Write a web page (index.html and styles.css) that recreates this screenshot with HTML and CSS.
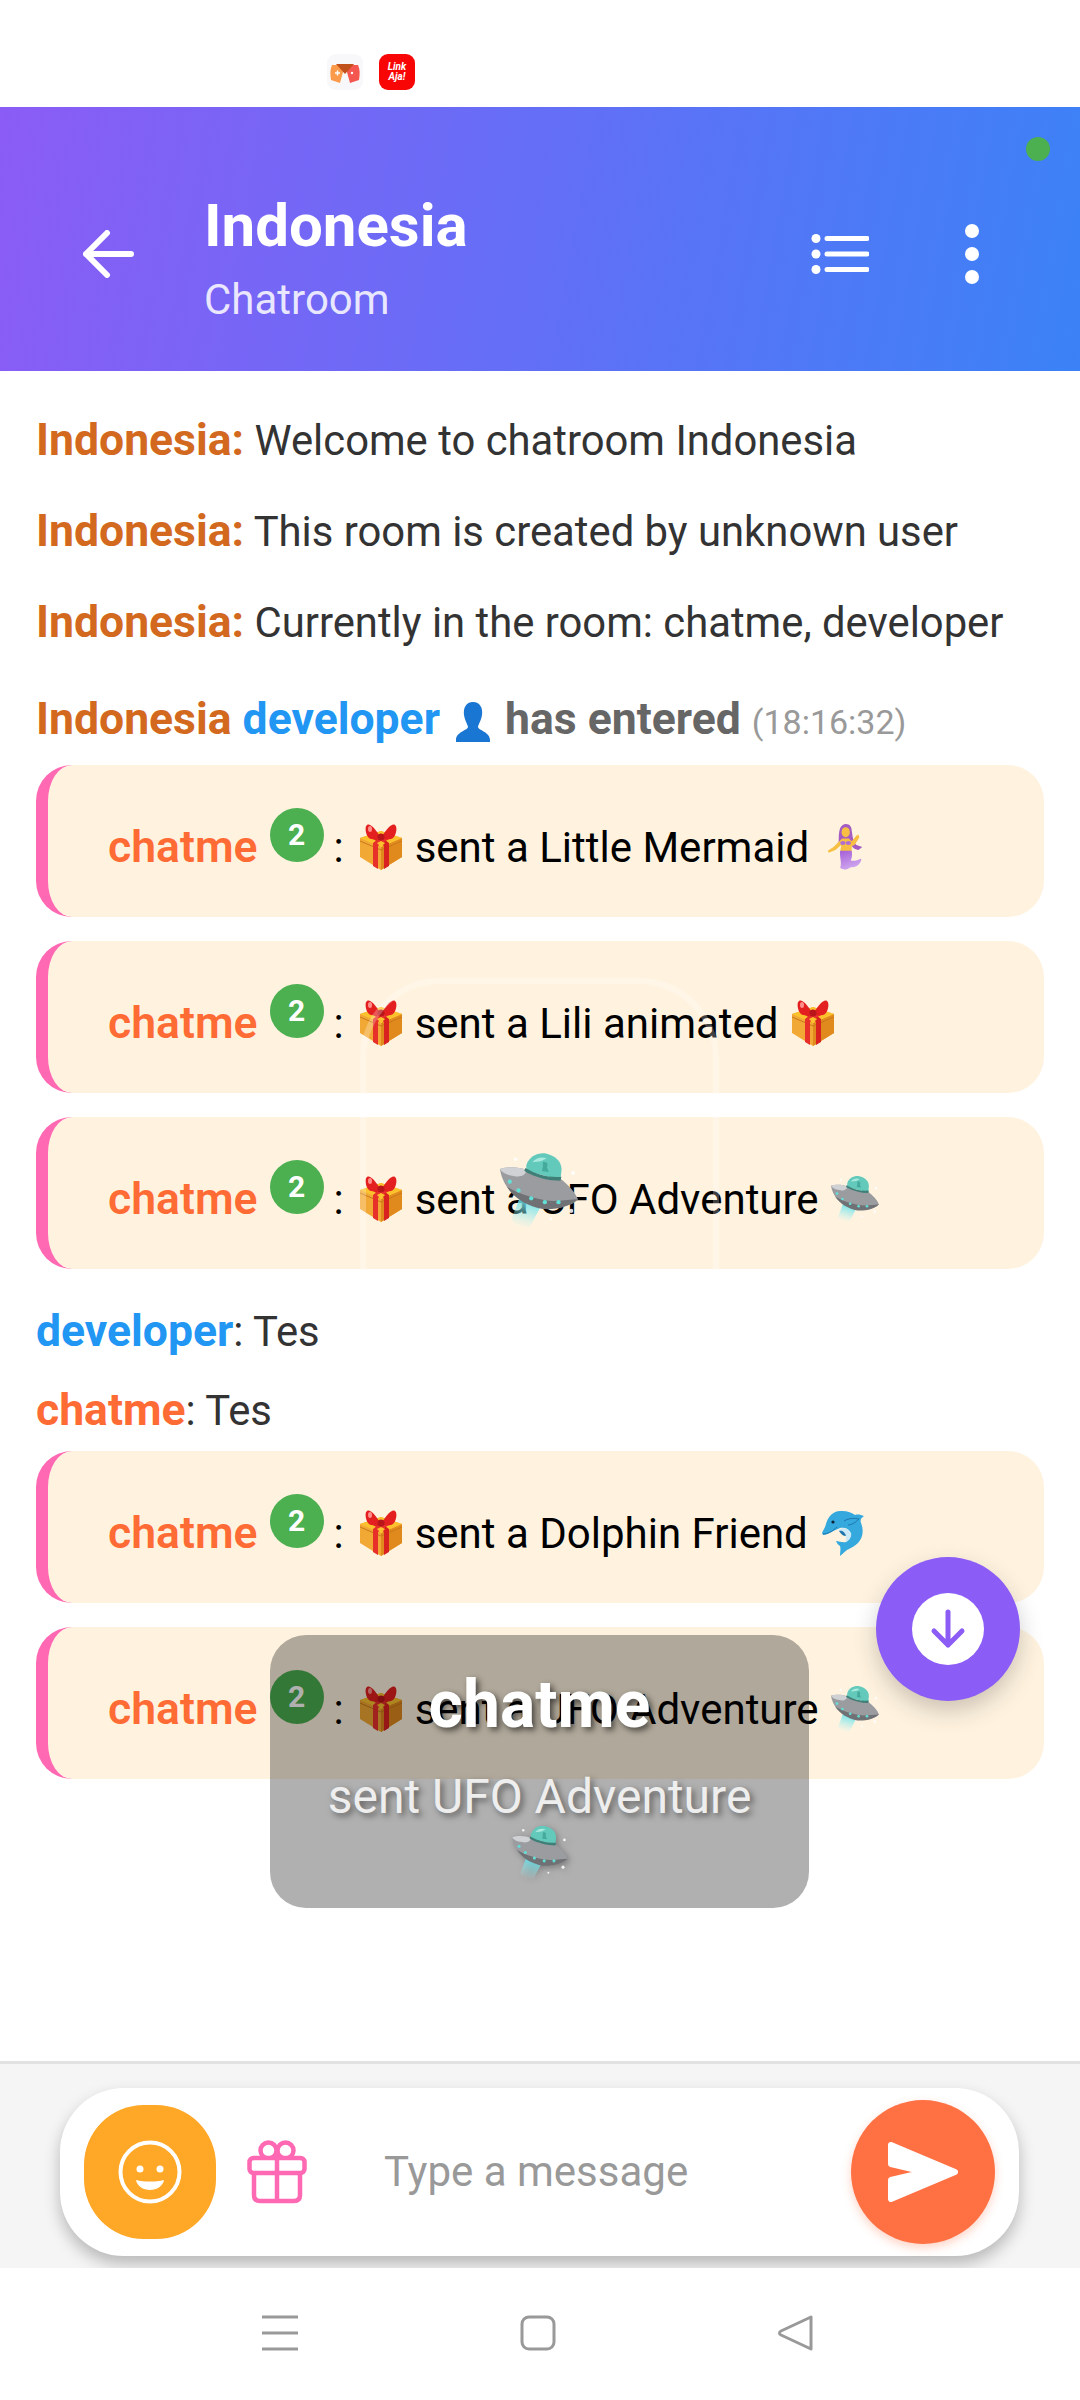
FILE: index.html
```html
<!DOCTYPE html>
<html lang="en">
<head>
<meta charset="utf-8">
<title>Indonesia Chatroom</title>
<link rel="stylesheet" href="styles.css">
</head>
<body>
<svg class="defs" width="0" height="0" aria-hidden="true">
  <defs>
    <linearGradient id="beam" x1="0.6" y1="0" x2="0.3" y2="1">
      <stop offset="0" stop-color="#5fdfe8"/>
      <stop offset="1" stop-color="#a8f0f2" stop-opacity="0"/>
    </linearGradient>
    <linearGradient id="tail" x1="0" y1="0" x2="0.4" y2="1">
      <stop offset="0" stop-color="#a45fd6"/>
      <stop offset="1" stop-color="#cfa6f0"/>
    </linearGradient>
    <symbol id="gift" viewBox="0 0 44 46">
      <path d="M1 14 22 7 43 14V33L22 46 1 33Z" fill="#f2a835"/>
      <path d="M22 23 43 14V33L22 46Z" fill="#e08a1e"/>
      <path d="M1 14 22 7 43 14 22 23Z" fill="#fcc22e"/>
      <path d="M1 17 22 26 43 17" fill="none" stroke="#c97a18" stroke-width="1"/>
      <path d="M8 11 16 8 30 19V42L25 45V22Z" fill="#d9221f"/>
      <path d="M36 11 28 8 14 19V42L19 45V22Z" fill="#e8302a"/>
      <path d="M18 19 22 17 26 19 22 23Z" fill="#fcc22e"/>
      <path d="M22 14C16 4 11-1 8 1 5 3 7 14 12 15 16 16 20 15 22 14Z" fill="#e3201f"/>
      <path d="M22 14C28 4 33-1 36 1 39 3 37 14 32 15 28 16 24 15 22 14Z" fill="#e3201f"/>
      <circle cx="22" cy="13" r="3.5" fill="#b8161a"/>
      <ellipse cx="11" cy="5" rx="2" ry="3" fill="#ff8f8a"/>
    </symbol>
    <symbol id="ufo" viewBox="0 0 80 76">
      <path d="M20 46 12 67C13 73 24 78 31 75L43 52Z" fill="url(#beam)"/>
      <path d="M27 12C30 3 38-1 47 0 57 2 64 9 63 18L62 27 27 18Z" fill="#62c9bb"/>
      <path d="M33 9C37 4 43 3 48 5L42 8Z" fill="#a9e9de"/>
      <path d="M44 9C48 8 50 11 48 14L50 19 43 18 44 14Z" fill="#45a99b"/>
      <path d="M0 16C8 13 20 14 27 17 38 23 50 26 62 26 70 32 77 40 80 47 75 52 68 55 58 56 44 58 24 50 10 38 5 32 1 24 0 16Z" fill="#9b9ca0"/>
      <path d="M0 16C8 13 20 14 27 17 27 22 21 25 14 23 7 22 2 20 0 16Z" fill="#d0d1d4"/>
      <path d="M7 34C14 46 30 55 44 57 58 58 72 54 80 47 72 47 58 50 46 48 30 45 16 40 7 34Z" fill="#6f7175"/>
      <path d="M26 15C38 22 50 25 63 24L62 28C50 28 37 25 25 18Z" fill="#3f7f78"/>
      <g fill="#63e0d6">
        <circle cx="10" cy="29" r="2.200"/><circle cx="19" cy="38" r="2.200"/><circle cx="32" cy="46" r="2.200"/><circle cx="46" cy="50" r="2.200"/><circle cx="60" cy="50" r="2.200"/>
      </g>
      <g fill="#fff" opacity=".85">
        <circle cx="16" cy="6" r="1.800"/><circle cx="75" cy="20" r="2"/><circle cx="73" cy="59" r="2.200"/><circle cx="52" cy="67" r="1.400"/>
      </g>
    </symbol>
    <symbol id="mermaid" viewBox="0 0 36 48">
      <path d="M12 8C13 2 16 0 19 0 23 0 25 3 25 7 26 12 26 18 30 22L36 24 32 27C27 27 24 23 22 16H15C14 19 13 21 11 21 12 16 11 12 12 8Z" fill="#a45cc2"/>
      <ellipse cx="18.700" cy="8.500" rx="4.300" ry="5.200" fill="#f7c043"/>
      <path d="M15 15H22L25 18 30 12 32 11 33 14 28 22 25 23 25 29H13L14 22 8 27 1 30 0 28 6 24 12 18Z" fill="#f7c043"/>
      <ellipse cx="15.800" cy="19.800" rx="2.800" ry="2" fill="#b06fd0"/><ellipse cx="21.500" cy="19.800" rx="2.800" ry="2" fill="#b06fd0"/>
      <path d="M13 28H25C26 33 25 36 24 38 27 39 31 38 35 36 35 41 30 46 24 45 20 48 16 48 13 46 15 40 12 34 13 28Z" fill="url(#tail)"/>
    </symbol>
    <symbol id="dolphin" viewBox="0 0 44 46">
      <path d="M0 23C1 20 3 18 4 14 6 6 12 0 20 1 26 1 30 3 33 5 36 4 39 5 42 6 39 8 38 10 39 13 42 20 41 28 36 33 33 36 29 38 27 39 24 40 22 43 18 46 18 42 19 39 18 36 16 35 15 33 14 31 17 31 21 33 24 32 28 30 29 27 28 22 26 18 22 17 18 18 12 20 6 25 1 25Z" fill="#35a9dd"/>
      <path d="M16 20C21 17 27 18 29 23 30 27 27 31 23 32 26 27 22 22 16 20Z" fill="#cbe9f6"/>
      <path d="M17 21C20 20 23 22 24 26 21 26 19 24 17 21Z" fill="#1d76ab"/>
      <path d="M1 24C6 24 11 21 15 17" fill="none" stroke="#1d76ab" stroke-width="1"/>
      <path d="M22 11C27 8 33 8 37 9 34 12 30 15 26 15" fill="none" stroke="#1d76ab" stroke-width="1"/>
      <circle cx="11" cy="12" r="1.600" fill="#123"/>
    </symbol>
  </defs>
</svg>

<div class="screen">
  <div class="status">
    <div class="app-icon app-game">
      <svg viewBox="0 0 36 36" width="36" height="36">
        <path d="M5 11H18L13 29 4 26C3 20 3 15 5 11Z" fill="#fb9a4a"/>
        <path d="M31 11H18L23 29 32 26C33 20 33 15 31 11Z" fill="#f4574f"/>
        <path d="M9 10H27L18 20Z" fill="#c1521c"/>
        <path d="M8 19h5M10.500 16.500v5" stroke="#fff" stroke-width="1.500"/>
        <circle cx="25" cy="19" r="1.200" fill="#fff"/>
      </svg>
    </div>
    <div class="app-icon app-link"><span class="app-link-text">Link<br>Aja!</span></div>
  </div>

  <header class="topbar">
    <span class="online-dot"></span>
    <svg class="back" viewBox="0 0 51 48" width="51" height="48">
      <path d="M24 3 3 24 24 45M3 24H48" fill="none" stroke="#fff" stroke-width="6" stroke-linecap="round" stroke-linejoin="round"/>
    </svg>
    <div class="room">
      <div class="room-name">Indonesia</div>
      <div class="room-sub">Chatroom</div>
    </div>
    <svg class="list-icon" viewBox="0 0 58 40" width="58" height="40">
      <g fill="#fff"><circle cx="5" cy="4.500" r="4.500"/><circle cx="5" cy="20" r="4.500"/><circle cx="5" cy="35.500" r="4.500"/></g>
      <path d="M16 4.500H56M16 20H56M16 35.500H56" stroke="#fff" stroke-width="5" stroke-linecap="round"/>
    </svg>
    <svg class="kebab" viewBox="0 0 14 60" width="14" height="60">
      <g fill="#fff"><circle cx="7" cy="7" r="7"/><circle cx="7" cy="30" r="7"/><circle cx="7" cy="53" r="7"/></g>
    </svg>
  </header>

  <main class="chat">
    <div class="sys"><b class="room-tag">Indonesia:</b> Welcome to chatroom Indonesia</div>
    <div class="sys"><b class="room-tag">Indonesia:</b> This room is created by unknown user</div>
    <div class="sys"><b class="room-tag">Indonesia:</b> Currently in the room: chatme, developer</div>
    <div class="enter">
      <b class="room-tag">Indonesia</b> <b class="dev">developer</b>
      <svg class="person" viewBox="0 0 34 40" width="34" height="40"><path d="M17 0C24 0 27 6 26 13 25 19 22 23 22 25 22 28 34 30 34 38V40H0V38C0 30 12 28 12 25 12 23 9 19 8 13 7 6 10 0 17 0Z" fill="#1976d2"/></svg>
      <b class="entered">has entered</b> <span class="time">(18:16:32)</span>
    </div>

    <div class="gift-card">
      <span class="sender">chatme</span><span class="level">2</span><span class="colon">:</span>
      <svg class="emo"><use href="#gift"/></svg><span class="gift-text">sent a Little Mermaid</span>
      <svg class="emo emo-mermaid"><use href="#mermaid"/></svg>
    </div>
    <div class="gift-card">
      <span class="sender">chatme</span><span class="level">2</span><span class="colon">:</span>
      <svg class="emo"><use href="#gift"/></svg><span class="gift-text">sent a Lili animated</span>
      <svg class="emo"><use href="#gift"/></svg>
    </div>
    <div class="gift-card">
      <span class="sender">chatme</span><span class="level">2</span><span class="colon">:</span>
      <svg class="emo"><use href="#gift"/></svg><span class="gift-text">sent a UFO Adventure</span>
      <svg class="emo emo-ufo"><use href="#ufo"/></svg>
    </div>

    <div class="line line-dev"><b class="dev">developer</b>: Tes</div>
    <div class="line line-me"><b class="me">chatme</b>: Tes</div>

    <div class="gift-card">
      <span class="sender">chatme</span><span class="level">2</span><span class="colon">:</span>
      <svg class="emo"><use href="#gift"/></svg><span class="gift-text">sent a Dolphin Friend</span>
      <svg class="emo emo-dolphin"><use href="#dolphin"/></svg>
    </div>
    <div class="gift-card">
      <span class="sender">chatme</span><span class="level">2</span><span class="colon">:</span>
      <svg class="emo"><use href="#gift"/></svg><span class="gift-text">sent a UFO Adventure</span>
      <svg class="emo emo-ufo"><use href="#ufo"/></svg>
    </div>
  </main>

  <footer class="composer">
    <div class="pill">
      <div class="emoji-btn">
        <svg viewBox="0 0 66 66" width="66" height="66">
          <circle cx="33" cy="33" r="29.500" fill="none" stroke="#fff" stroke-width="4"/>
          <circle cx="23" cy="30" r="3.500" fill="#fff"/><circle cx="43" cy="30" r="3.500" fill="#fff"/>
          <path d="M19 41C28 43 38 43 47 41 46 47 40 51 33 51 26 51 20 47 19 41Z" fill="#fff"/>
        </svg>
      </div>
      <svg class="gift-btn" viewBox="0 0 60 64" width="60" height="64">
        <g fill="none" stroke="#ff69b4" stroke-width="4.500" stroke-linejoin="round">
          <circle cx="21.500" cy="10.500" r="8"/>
          <circle cx="38.500" cy="10.500" r="8"/>
          <rect x="2.500" y="18" width="55" height="15" rx="4" fill="#fff"/>
          <path d="M7 33V55C7 59 9 61 13 61H47C51 61 53 59 53 55V33M30 18V61"/>
        </g>
      </svg>
      <span class="placeholder">Type a message</span>
      <div class="send-btn">
        <svg viewBox="0 0 72 62" width="72" height="62">
          <path d="M4 4 68 31 4 58V39L38 31 4 23Z" fill="#fff" stroke="#fff" stroke-width="6" stroke-linejoin="round"/>
        </svg>
      </div>
    </div>
  </footer>

  <nav class="sysnav">
    <svg viewBox="0 0 36 36" width="36" height="36"><path d="M0 2H36M0 18H36M0 34H36" stroke="#999" stroke-width="3"/></svg>
    <svg viewBox="0 0 36 36" width="36" height="36"><rect x="2" y="2" width="32" height="32" rx="7" fill="none" stroke="#999" stroke-width="3"/></svg>
    <svg viewBox="0 0 36 36" width="36" height="36"><path d="M33 2V34L3 20C1 19 1 17 3 16Z" fill="none" stroke="#999" stroke-width="3" stroke-linejoin="round"/></svg>
  </nav>

  <div class="ghost"></div>
  <svg class="ufo-float"><use href="#ufo"/></svg>

  <div class="toast">
    <div class="toast-name">chatme</div>
    <div class="toast-text">sent UFO Adventure</div>
    <svg class="toast-ufo"><use href="#ufo"/></svg>
  </div>

  <div class="fab">
    <div class="fab-inner">
      <svg viewBox="0 0 36 40" width="36" height="40"><path d="M18 3V36M4 22 18 36 32 22" fill="none" stroke="#8b5cf6" stroke-width="5" stroke-linecap="round" stroke-linejoin="round"/></svg>
    </div>
  </div>
</div>
</body>
</html>
```
FILE: styles.css
```css
* { box-sizing: border-box; }
html, body { margin: 0; padding: 0; }
body { font-family: Roboto, "Noto Sans", sans-serif; background: #fff; }
.defs { position: absolute; }

.screen {
  position: relative;
  width: 1080px;
  height: 2400px;
  overflow: hidden;
  display: flex;
  flex-direction: column;
  background: #fff;
}

.status {
  height: 107px;
  flex: none;
  display: flex;
  gap: 16px;
  padding: 54px 0 0 327px;
}
.app-icon { width: 36px; height: 36px; border-radius: 9px; }
.app-game { background: #f8f8fa; }
.app-link {
  background: #f80606;
  color: #fff;
  display: flex;
  align-items: center;
  justify-content: center;
}
.app-link-text {
  font-size: 10px;
  line-height: 10px;
  font-weight: 700;
  font-style: italic;
  text-align: center;
}

.topbar {
  position: relative;
  height: 264px;
  flex: none;
  display: flex;
  align-items: center;
  padding: 30px 0 0 83px;
  background: linear-gradient(100deg, #8b5cf6 0%, #3b82f6 100%);
  color: #fff;
}
.online-dot {
  position: absolute;
  top: 30px;
  left: 1026px;
  width: 24px;
  height: 24px;
  border-radius: 50%;
  background: #4caf50;
}
.back { flex: none; margin-right: 70px; }
.room { flex: 1; margin-top: 8px; }
.room-name { font-size: 60px; line-height: 70px; font-weight: 700; }
.room-sub { font-size: 42px; line-height: 50px; margin-top: 14px; color: rgba(255,255,255,.85); }
.list-icon { flex: none; margin-right: 96px; }
.kebab { flex: none; margin-right: 101px; }

.chat {
  flex: 1;
  padding: 24px 36px 0;
  color: #333;
  font-size: 41.8px;
}
.sys { height: 91px; line-height: 91px; white-space: nowrap; }
.sys .room-tag { font-size: 44.5px; }
.room-tag { color: #d2691e; font-weight: 700; }
.enter {
  height: 74px;
  line-height: 74px;
  margin-top: 14px;
  margin-bottom: 9px;
  font-size: 44.5px;
  white-space: nowrap;
}
.dev { color: #2196f3; font-weight: 700; }
.me { color: #ff6b35; font-weight: 700; }
.person { vertical-align: -8px; margin: 0 4px 0 5px; }
.entered { color: #666; font-weight: 700; }
.time { color: #999; font-size: 34px; }

.gift-card {
  height: 152px;
  margin: 0 0 24px;
  padding: 12px 60px 0;
  display: flex;
  align-items: center;
  border-left: 12px solid #ff69b4;
  border-radius: 36px;
  background: #fff3e0;
  color: #000;
}
.sender { color: #ff6b35; font-weight: 600; font-size: 44.5px; }
.level {
  width: 54px;
  height: 54px;
  margin: -24px 10px 0 12px;
  border-radius: 50%;
  background: #4caf50;
  color: #fff;
  font-size: 30px;
  font-weight: 700;
  line-height: 54px;
  text-align: center;
}
.colon { font-size: 42px; margin-right: 15px; }
.gift-text { font-size: 42px; margin: 0 12px 0 12px; }
.emo { width: 44px; height: 46px; flex: none; }
.emo-mermaid { width: 36px; margin-left: 6px; }
.emo-dolphin { margin-left: 2px; }
.emo-ufo { width: 48px; height: 46px; }

.line { line-height: 50px; font-size: 41.8px; }
.line b { font-size: 44.5px; }
.line-dev { margin-top: 37px; }
.line-me { margin-top: 28px; margin-bottom: 15px; }

.composer {
  flex: none;
  height: 207px;
  padding: 24px 61px 0 60px;
  background: #f5f5f5;
  border-top: 3px solid #e2e2e2;
  overflow: hidden;
}
.pill {
  height: 168px;
  border-radius: 64px;
  background: #fff;
  box-shadow: 0 8px 16px rgba(0,0,0,.25);
  display: flex;
  align-items: center;
  padding: 0 24px 1px 24px;
}
.emoji-btn {
  flex: none;
  width: 132px;
  height: 134px;
  border-radius: 60px;
  background: #ffa726;
  display: flex;
  align-items: center;
  justify-content: center;
}
.gift-btn { flex: none; margin-left: 31px; }
.placeholder { flex: 1; margin-left: 77px; color: #999; font-size: 42px; }
.send-btn {
  flex: none;
  width: 144px;
  height: 144px;
  border-radius: 50%;
  background: #ff7043;
  box-shadow: 0 4px 10px rgba(255,112,67,.3);
  display: flex;
  align-items: center;
  justify-content: center;
}

.sysnav {
  flex: none;
  height: 132px;
  display: flex;
  align-items: flex-start;
  padding: 47px 0 0 262px;
  gap: 222px;
  background: #fff;
}

.ghost {
  position: absolute;
  left: 360px;
  top: 978px;
  width: 359px;
  height: 291px;
  border: 6px solid rgba(255,255,255,.25);
  border-bottom: 0;
  border-radius: 80px 80px 0 0;
}
.ufo-float {
  position: absolute;
  left: 500px;
  top: 1153px;
  width: 78px;
  height: 75px;
}

.toast {
  position: absolute;
  left: 270px;
  top: 1635px;
  width: 539px;
  height: 273px;
  padding-top: 32px;
  border-radius: 36px;
  background: rgba(0,0,0,.31);
  color: #fff;
  text-align: center;
}
.toast-name {
  font-size: 66px;
  line-height: 76px;
  font-weight: 700;
  text-shadow: 3px 3px 6px rgba(0,0,0,.6);
}
.toast-text {
  font-size: 48px;
  line-height: 56px;
  margin-top: 26px;
  color: #eee;
  text-shadow: 3px 3px 6px rgba(0,0,0,.5);
}
.toast-ufo {
  display: block;
  width: 56px;
  height: 53px;
  margin: 1px auto 0;
  filter: drop-shadow(2px 2px 3px rgba(0,0,0,.3));
}

.fab {
  position: absolute;
  left: 876px;
  top: 1557px;
  width: 144px;
  height: 144px;
  border-radius: 50%;
  background: #8b5cf6;
  box-shadow: 0 10px 24px rgba(0,0,0,.2);
  display: flex;
  align-items: center;
  justify-content: center;
}
.fab-inner {
  width: 72px;
  height: 72px;
  border-radius: 50%;
  background: #fff;
  display: flex;
  align-items: center;
  justify-content: center;
}
```
